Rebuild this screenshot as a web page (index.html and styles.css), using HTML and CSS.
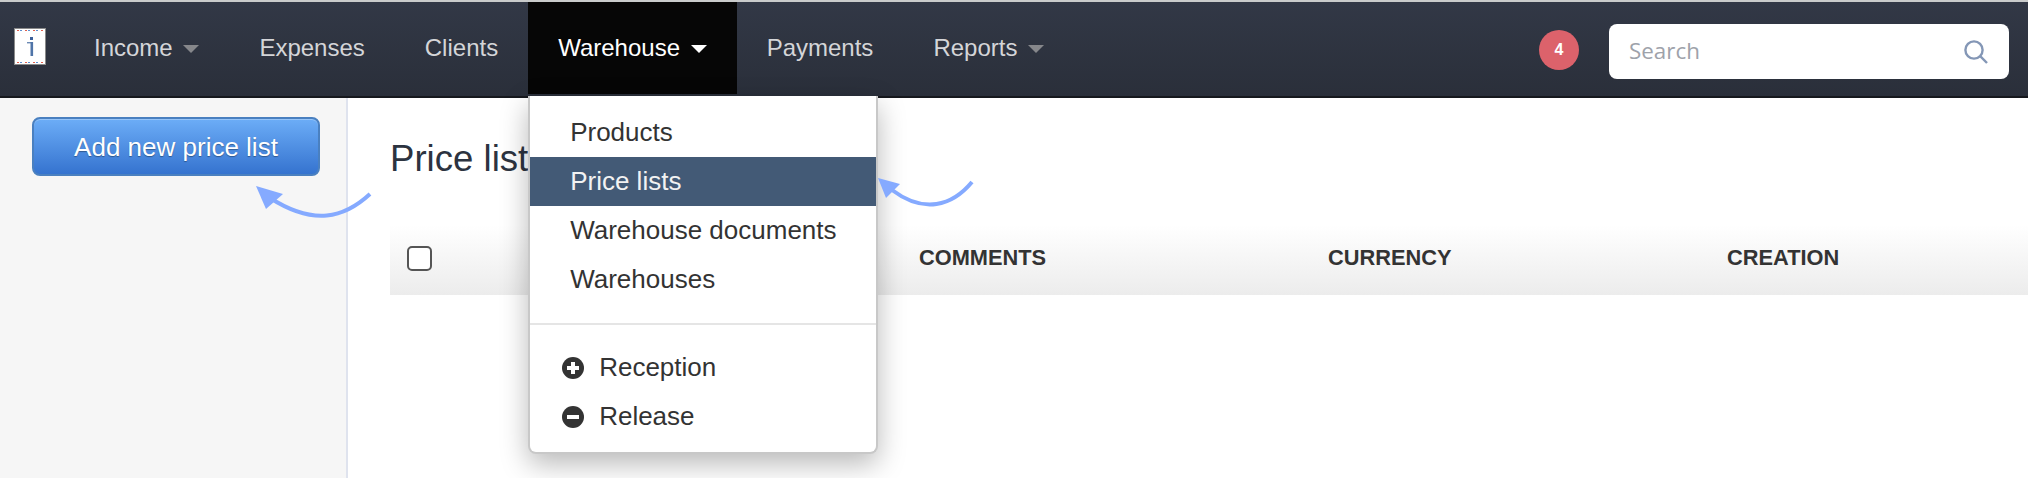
FILE: index.html
```html
<!DOCTYPE html>
<html lang="en">
<head>
    <meta charset="UTF-8">
    <meta name="viewport" content="width=device-width, initial-scale=1.0">
    <title>Price lists</title>
    <link rel="stylesheet" href="styles.css">
</head>
<body>

    <nav class="navbar">
        <a class="logo" href="#">
            <svg width="32" height="37" viewBox="0 0 32 37">
                <rect x="0.5" y="0.5" width="31" height="36" fill="#fff" stroke="#8a8a8a"/>
                <line x1="3" y1="2.5" x2="30" y2="2.5" stroke="#e0604f" stroke-dasharray="2 6"/>
                <line x1="6" y1="2.5" x2="30" y2="2.5" stroke="#5b8fd0" stroke-dasharray="2 6"/>
                <line x1="3" y1="34.5" x2="30" y2="34.5" stroke="#e0604f" stroke-dasharray="2 6"/>
                <line x1="6" y1="34.5" x2="30" y2="34.5" stroke="#5b8fd0" stroke-dasharray="2 6"/>
                <rect x="16" y="9" width="3" height="3" fill="#3a5f9a"/>
                <rect x="13" y="14" width="6" height="1.4" fill="#6d8bb5"/>
                <rect x="16.5" y="14" width="2.6" height="14" fill="#4f74a8"/>
            </svg>
        </a>
        <ul class="nav-items">
            <li><a href="#">Income <span class="caret"></span></a></li>
            <li><a href="#">Expenses</a></li>
            <li><a href="#">Clients</a></li>
            <li class="active">
                <a href="#">Warehouse <span class="caret"></span></a>
                <div class="dropdown">
                    <a class="drop-item" href="#">Products</a>
                    <a class="drop-item selected" href="#">Price lists</a>
                    <a class="drop-item" href="#">Warehouse documents</a>
                    <a class="drop-item" href="#">Warehouses</a>
                    <div class="divider"></div>
                    <a class="drop-item with-icon" href="#">
                        <svg width="22" height="22" viewBox="0 0 22 22">
                            <circle cx="11" cy="11" r="11" fill="#333"/>
                            <path d="M9 5h4v4h4v4h-4v4H9v-4H5V9h4z" fill="#fff"/>
                        </svg>
                        Reception
                    </a>
                    <a class="drop-item with-icon" href="#">
                        <svg width="22" height="22" viewBox="0 0 22 22">
                            <circle cx="11" cy="11" r="11" fill="#333"/>
                            <rect x="5" y="9" width="12" height="4" fill="#fff"/>
                        </svg>
                        Release
                    </a>
                </div>
            </li>
            <li><a href="#">Payments</a></li>
            <li><a href="#">Reports <span class="caret"></span></a></li>
        </ul>
        <span class="badge">4</span>
        <div class="search">
            <input type="text" placeholder="Search">
            <svg width="26" height="26" viewBox="0 0 26 26" fill="none" stroke="#8497b6" stroke-width="2.4">
                <circle cx="11" cy="11" r="8.6"/>
                <line x1="17.2" y1="17.2" x2="24" y2="24"/>
            </svg>
        </div>
    </nav>

    <div class="main">
        <aside class="sidebar">
            <a class="btn-primary" href="#">Add new price list</a>
        </aside>
        <section class="content">
            <h1>Price lists</h1>
            <div class="table-head">
                <div class="cell-check"><span class="checkbox"></span></div>
                <div>COMMENTS</div>
                <div>CURRENCY</div>
                <div>CREATION</div>
            </div>
        </section>
    </div>

    <!-- hand drawn hints on top of the screenshot -->
    <svg class="hint hint-left" width="120" height="40" viewBox="0 0 120 40" fill="none">
        <path d="M114 8C88 32 58 40 14 12" stroke="#85aaff" stroke-width="4"/>
        <path d="M0 0L27 8L10 23z" fill="#85aaff"/>
    </svg>
    <svg class="hint hint-right" width="100" height="36" viewBox="0 0 100 36" fill="none">
        <path d="M94 4C74 28 46 36 14 12" stroke="#85aaff" stroke-width="4"/>
        <path d="M0 0L22 6L8 20z" fill="#85aaff"/>
    </svg>

</body>
</html>
```

FILE: styles.css
```css
* {
    box-sizing: border-box;
}
html, body {
    height: 100%;
}
body {
    margin: 0;
    font-family: "Liberation Sans", Arial, sans-serif;
    color: #333;
    background: #fff;
    overflow: hidden;
    position: relative;
    display: flex;
    flex-direction: column;
}
a {
    color: inherit;
    text-decoration: none;
}

.navbar {
    flex: none;
    height: 98px;
    display: flex;
    align-items: flex-start;
    border-top: 2px solid #c9cbcb;
    border-bottom: 2px solid #16181d;
    background: linear-gradient(#323846, #2a2f3a);
    position: relative;
    z-index: 5;
}
.logo {
    flex: none;
    display: block;
    margin: 26px 0 0 14px;
    height: 37px;
}
.logo svg {
    display: block;
}
.nav-items {
    display: flex;
    list-style: none;
    margin: 0 0 0 18px;
    padding: 0;
    flex: 1;
}
.nav-items > li {
    position: relative;
}
.nav-items > li > a {
    display: block;
    height: 92px;
    padding: 0 30px;
    line-height: 92px;
    font-size: 24px;
    color: #d4d5d8;
    white-space: nowrap;
}
.nav-items > li.active > a {
    background: #060606;
    color: #fff;
}
.caret {
    display: inline-block;
    width: 0;
    height: 0;
    margin-left: 4px;
    vertical-align: 3px;
    border-left: 8px solid transparent;
    border-right: 8px solid transparent;
    border-top: 8px solid #86878b;
}
.active .caret {
    border-top-color: #fff;
}

.dropdown {
    position: absolute;
    top: 94px;
    left: 0;
    width: 350px;
    height: 358px;
    padding: 12px 0 11px;
    background: #fff;
    border: 2px solid #c8c8c8;
    border-top: 0;
    border-radius: 0 0 8px 8px;
    box-shadow: 0 10px 28px rgba(0, 0, 0, 0.28);
}
.drop-item {
    display: flex;
    align-items: center;
    height: 49px;
    padding-left: 40px;
    font-size: 26px;
    color: #333;
    white-space: nowrap;
}
.drop-item.selected {
    background: #435a76;
    color: #f2f2f2;
}
.drop-item.with-icon {
    padding-left: 32px;
    gap: 15px;
}
.divider {
    height: 2px;
    margin: 19px 0 18px;
    background: #e5e5e5;
}

.badge {
    flex: none;
    width: 40px;
    height: 40px;
    margin: 28px 30px 0 0;
    border-radius: 50%;
    background: #dc626b;
    color: #fff;
    font-size: 16px;
    font-weight: bold;
    line-height: 40px;
    text-align: center;
}
.search {
    flex: none;
    width: 400px;
    height: 55px;
    margin: 22px 19px 0 0;
    padding: 0 20px 0 20px;
    display: flex;
    align-items: center;
    background: #fff;
    border-radius: 8px;
}
.search input {
    flex: 1;
    min-width: 0;
    border: 0;
    outline: none;
    padding: 0 0 2px;
    font-family: "Open Sans", sans-serif;
    font-size: 22.4px;
    background: transparent;
}
.search input::placeholder {
    color: #9ea2aa;
    opacity: 1;
}

.main {
    flex: 1;
    display: flex;
}
.sidebar {
    flex: none;
    width: 348px;
    padding: 19px 0 0 32px;
    background: #f6f6f6;
    border-right: 2px solid #dfe3ee;
}
.btn-primary {
    display: block;
    width: 288px;
    height: 59px;
    line-height: 57px;
    text-align: center;
    font-size: 26px;
    color: #fff;
    background: linear-gradient(#6cadf7, #3573cf);
    border: 2px solid #4a80c0;
    border-radius: 8px;
    text-shadow: 0 1px 1px rgba(0, 0, 0, 0.35);
    box-shadow: inset 0 1px 0 rgba(255, 255, 255, 0.3);
}
.content {
    flex: 1;
    padding-left: 42px;
}
.content h1 {
    margin: 40px 0 0;
    height: 87px;
    font-size: 36.6px;
    font-weight: normal;
    line-height: 42px;
    color: #2c3340;
}
.table-head {
    height: 70px;
    padding-bottom: 4px;
    display: grid;
    grid-template-columns: 529px 409px 399px 1fr;
    align-items: center;
    font-size: 21.8px;
    font-weight: bold;
    color: #333;
    background: linear-gradient(#fff, #ececec);
}
.cell-check {
    padding-left: 17px;
    display: flex;
}
.checkbox {
    width: 25px;
    height: 25px;
    background: #fff;
    border: 2px solid #555;
    border-radius: 5px;
}

.hint {
    position: absolute;
    z-index: 10;
}
.hint-left {
    left: 256px;
    top: 186px;
}
.hint-right {
    left: 878px;
    top: 178px;
}
```
